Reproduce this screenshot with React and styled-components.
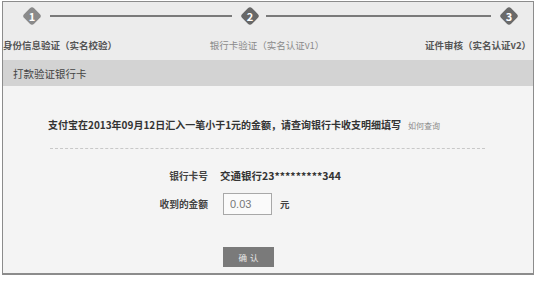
import React from 'react';
import styled, { createGlobalStyle } from 'styled-components';

// Базові стилі сторінки
const GlobalStyle = createGlobalStyle`
  body {
    margin: 0;
    background: #ffffff;
    font-family: "Noto Sans CJK SC", "Noto Sans", sans-serif;
  }
`;

// Рамка всієї форми
const Frame = styled.div`
  margin: 1px 0 0 2px;
  width: 530px;
  border: 1px solid #8c8c8c;
  border-bottom-width: 2px;
  background: #f4f4f4;
`;

// Блок з кроками
const Steps = styled.div`
  height: 58px;
  background: #ececec;
  display: flex;
  flex-direction: column;
`;

const Track = styled.div`
  display: flex;
  align-items: center;
  height: 20px;
  margin-top: 4px;
  padding-left: 19px;
`;

const Diamond = styled.div`
  position: relative;
  width: 20px;
  height: 20px;
  display: flex;
  align-items: center;
  justify-content: center;
  color: #ffffff;
  font-size: 11px;
  font-weight: bold;

  &::before {
    content: '';
    position: absolute;
    left: 3px;
    top: 3px;
    width: 14px;
    height: 14px;
    border-radius: 3px;
    background: ${(p) => p.$color};
    transform: rotate(45deg);
  }

  span {
    position: relative;
  }
`;

const Line = styled.div`
  width: ${(p) => p.$width}px;
  height: 2px;
  margin: 0 ${(p) => p.$right}px 0 ${(p) => p.$left}px;
  background: #7a7a7a;
`;

const Labels = styled.div`
  display: grid;
  grid-template-columns: 1fr auto 1fr;
  margin-top: 12px;
  padding-right: 2px;
  font-size: 9.5px;
  line-height: 14px;
`;

const StepLabel = styled.div`
  justify-self: ${(p) => p.$align};
  color: ${(p) => (p.$muted ? '#8a8a8a' : '#555555')};
  font-weight: ${(p) => (p.$muted ? 'normal' : 'bold')};
  white-space: nowrap;
`;

// Сірий заголовок
const Header = styled.div`
  height: 26px;
  display: flex;
  align-items: center;
  padding-left: 10px;
  background: #d3d3d3;
  color: #444444;
  font-size: 10.5px;
`;

const Body = styled.div`
  height: 187px;
  padding-top: 31px;
  box-sizing: border-box;
`;

const Notice = styled.div`
  padding-left: 45px;
  font-size: 10px;
  line-height: 16px;
  font-weight: bold;
  color: #333333;
  white-space: nowrap;
`;

const HowLink = styled.span`
  margin-left: 7px;
  font-size: 8px;
  font-weight: normal;
  color: #8a8a8a;
`;

const Dashed = styled.div`
  width: 435px;
  margin: 14px 0 0 47px;
  border-top: 1px dashed #c8c8c8;
`;

const Form = styled.div`
  display: grid;
  grid-template-columns: 205px auto;
  column-gap: 12px;
  row-gap: 9px;
  align-items: center;
  margin-top: 19px;
  font-size: 9.7px;
`;

const FieldLabel = styled.div`
  justify-self: end;
  color: #444444;
  font-weight: bold;
`;

const FieldValue = styled.div`
  display: flex;
  align-items: center;
  gap: 8px;
  color: #333333;
  font-weight: bold;
  font-size: 10.5px;
  line-height: 16px;
`;

const AmountInput = styled.input`
  width: 49px;
  height: 22px;
  box-sizing: border-box;
  margin-left: 3px;
  padding: 0 0 0 6px;
  border: 1px solid #a8a8a8;
  background: #fafafa;
  color: #777777;
  font-family: "Liberation Sans", sans-serif;
  font-size: 11px;
  outline: none;
`;

const Unit = styled.span`
  font-size: 9.5px;
  color: #444444;
`;

const Submit = styled.button`
  display: block;
  width: 51px;
  height: 20px;
  margin: 32px 0 0 220px;
  border: none;
  background: #7a7a7a;
  color: #e8e8e8;
  font-family: "Noto Sans CJK SC", sans-serif;
  font-size: 8.5px;
  letter-spacing: 3px;
  padding: 0 0 0 3px;
`;

export default function App() {
  return (
    <>
      <GlobalStyle />
      <Frame>
        <Steps>
          <Track>
            <Diamond $color="#8a8a8a"><span>1</span></Diamond>
            <Line $width={182} $left={8} $right={8} />
            <Diamond $color="#686868"><span>2</span></Diamond>
            <Line $width={225} $left={6} $right={8} />
            <Diamond $color="#6a6a6a"><span>3</span></Diamond>
          </Track>
          <Labels>
            <StepLabel $align="start">身份信息验证（实名校验）</StepLabel>
            <StepLabel $align="center" $muted>银行卡验证（实名认证v1）</StepLabel>
            <StepLabel $align="end">证件审核（实名认证v2）</StepLabel>
          </Labels>
        </Steps>
        <Header>打款验证银行卡</Header>
        <Body>
          <Notice>
            支付宝在2013年09月12日汇入一笔小于1元的金额，请查询银行卡收支明细填写
            <HowLink>如何查询</HowLink>
          </Notice>
          <Dashed />
          <Form>
            <FieldLabel>银行卡号</FieldLabel>
            <FieldValue>交通银行23*********344</FieldValue>
            <FieldLabel>收到的金额</FieldLabel>
            <FieldValue>
              <AmountInput defaultValue="0.03" />
              <Unit>元</Unit>
            </FieldValue>
          </Form>
          <Submit>确认</Submit>
        </Body>
      </Frame>
    </>
  );
}
